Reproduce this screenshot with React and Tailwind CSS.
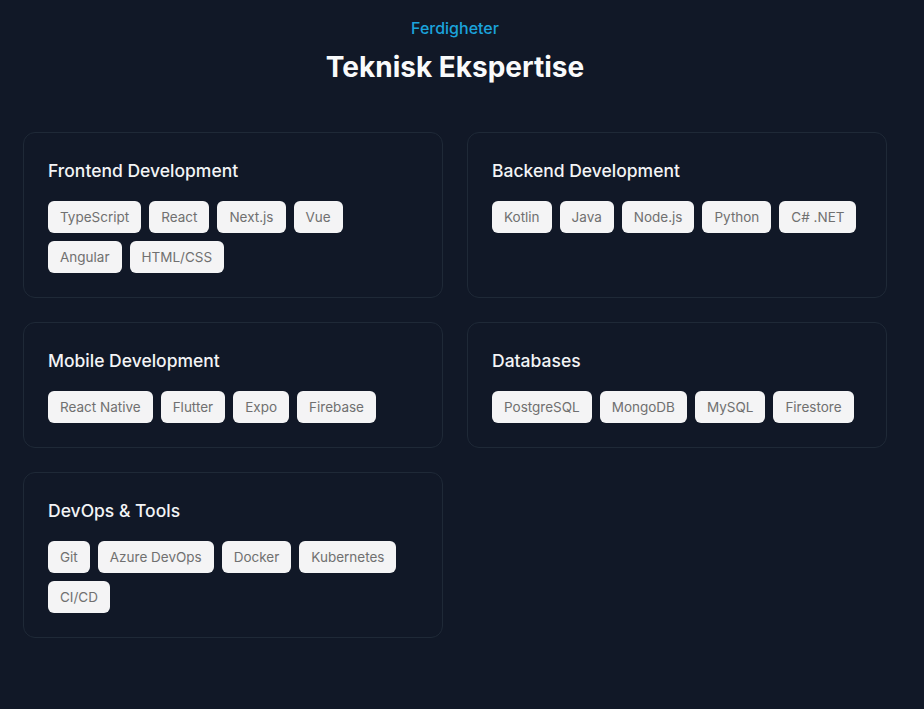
import React from "react";

const groups = [
  { title: "Frontend Development", items: ["TypeScript", "React", "Next.js", "Vue", "Angular", "HTML/CSS"] },
  { title: "Backend Development", items: ["Kotlin", "Java", "Node.js", "Python", "C# .NET"] },
  { title: "Mobile Development", items: ["React Native", "Flutter", "Expo", "Firebase"] },
  { title: "Databases", items: ["PostgreSQL", "MongoDB", "MySQL", "Firestore"] },
  { title: "DevOps & Tools", items: ["Git", "Azure DevOps", "Docker", "Kubernetes", "CI/CD"] },
];

export default function App() {
  return (
    <div
      className="min-h-[709px] w-full bg-[#111827] pl-[23px] pr-[37px] pt-[18px] pb-10"
      style={{ fontFamily: "Inter, 'Noto Sans', sans-serif" }}
    >
      {/* Header */}
      <div className="flex flex-col items-center">
        <span className="text-[16px] font-medium text-[#1ba3dc] leading-[20px]">Ferdigheter</span>
        <h2 className="mt-[13px] text-[28px] font-bold text-[#f9fafb] leading-[32px]">Teknisk Ekspertise</h2>
      </div>

      {/* Skill cards */}
      <div className="mt-[49px] grid grid-cols-2 gap-x-6 gap-y-6">
        {groups.map((g) => (
          <div key={g.title} className="rounded-xl border border-[#1f2937] bg-[#111827] p-6">
            <h3 className="text-[17.5px] font-medium text-[#f3f4f6] leading-[28px]">{g.title}</h3>
            <div className="mt-4 flex flex-wrap gap-2">
              {g.items.map((it) => (
                <span
                  key={it}
                  className="h-8 flex items-center rounded-md bg-[#f4f4f5] px-3 text-[13.5px] text-[#707070]"
                >
                  {it}
                </span>
              ))}
            </div>
          </div>
        ))}
      </div>
    </div>
  );
}
